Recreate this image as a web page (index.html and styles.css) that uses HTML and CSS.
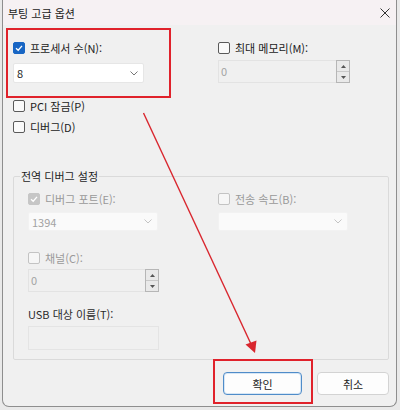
FILE: index.html
```html
<!DOCTYPE html>
<html lang="ko">
<head>
<meta charset="utf-8">
<title>부팅 고급 옵션</title>
<link rel="stylesheet" href="styles.css">
</head>
<body>
<div class="window">
  <div class="titlebar">
    <span class="title">부팅 고급 옵션</span>
    <svg class="close" width="10" height="10" viewBox="0 0 10 10"><path d="M0.5 0.5 L9.5 9.5 M9.5 0.5 L0.5 9.5" stroke="#333" stroke-width="1" fill="none"/></svg>
  </div>
  <div class="content">
    <div class="two-col top">
      <div class="col">
        <div class="check">
          <span class="box checked"><svg width="10" height="10" viewBox="0 0 10 10"><path d="M2 5.2 L4.2 7.2 L8 2.8" stroke="#fff" stroke-width="1.3" fill="none"/></svg></span>
          <span>프로세서 수(N):</span>
        </div>
        <div class="combo">
          <span>8</span>
          <svg class="chev" width="8" height="5" viewBox="0 0 8 5"><path d="M0.5 0.5 L4 4 L7.5 0.5" stroke="#777" stroke-width="1" fill="none"/></svg>
        </div>
      </div>
      <div class="col">
        <div class="check">
          <span class="box"></span>
          <span>최대 메모리(M):</span>
        </div>
        <div class="spin">
          <span class="val">0</span>
          <div class="spin-btns">
            <span class="sb"><svg width="5" height="3" viewBox="0 0 5 3"><path d="M0 3 L2.5 0 L5 3Z" fill="#555"/></svg></span>
            <span class="sb"><svg width="5" height="3" viewBox="0 0 5 3"><path d="M0 0 L2.5 3 L5 0Z" fill="#555"/></svg></span>
          </div>
        </div>
      </div>
    </div>

    <div class="check pci"><span class="box"></span><span>PCI 잠금(P)</span></div>
    <div class="check dbg"><span class="box"></span><span>디버그(D)</span></div>

    <fieldset class="group">
      <legend>전역 디버그 설정</legend>
      <div class="two-col inner">
        <div class="col">
          <div class="check disabled">
            <span class="box checked"><svg width="10" height="10" viewBox="0 0 10 10"><path d="M2 5.2 L4.2 7.2 L8 2.8" stroke="#fff" stroke-width="1.3" fill="none"/></svg></span>
            <span>디버그 포트(E):</span>
          </div>
          <div class="combo dis">
            <span>1394</span>
            <svg class="chev" width="8" height="5" viewBox="0 0 8 5"><path d="M0.5 0.5 L4 4 L7.5 0.5" stroke="#c4c4c4" stroke-width="1" fill="none"/></svg>
          </div>
        </div>
        <div class="col">
          <div class="check disabled">
            <span class="box"></span>
            <span>전송 속도(B):</span>
          </div>
          <div class="combo dis">
            <span></span>
            <svg class="chev" width="8" height="5" viewBox="0 0 8 5"><path d="M0.5 0.5 L4 4 L7.5 0.5" stroke="#c4c4c4" stroke-width="1" fill="none"/></svg>
          </div>
        </div>
      </div>
      <div class="check disabled channel"><span class="box"></span><span>채널(C):</span></div>
      <div class="spin small">
        <span class="val">0</span>
        <div class="spin-btns">
          <span class="sb"><svg width="5" height="3" viewBox="0 0 5 3"><path d="M0 3 L2.5 0 L5 3Z" fill="#555"/></svg></span>
          <span class="sb"><svg width="5" height="3" viewBox="0 0 5 3"><path d="M0 0 L2.5 3 L5 0Z" fill="#555"/></svg></span>
        </div>
      </div>
      <div class="label usb">USB 대상 이름(T):</div>
      <div class="textbox"></div>
    </fieldset>

    <div class="buttons">
      <button class="btn primary">확인</button>
      <button class="btn">취소</button>
    </div>
  </div>
</div>
<div class="highlight hl1"></div>
<div class="highlight hl2"></div>
<svg class="arrow" width="400" height="410" viewBox="0 0 400 410">
  <line x1="143.5" y1="113" x2="250.5" y2="343" stroke="#d9262e" stroke-width="1.4"/>
  <polygon points="255,353 245.5,344.5 256.5,340.5" fill="#d9262e"/>
</svg>
</body>
</html>
```
FILE: styles.css
```css
* { box-sizing: border-box; }
html, body {
  margin: 0;
  padding: 0;
}
body {
  width: 400px;
  height: 410px;
  overflow: hidden;
  position: relative;
  background: #e9e9e9;
  font-family: "Noto Sans CJK KR", "Noto Sans", sans-serif;
  font-size: 11px;
  color: #1b1b1b;
}
.window {
  margin-left: 2px;
  width: 395px;
  height: 407px;
  background: #f0f0f0;
  border: 1px solid #8e8e8e;
  border-top: none;
  border-radius: 0 0 7px 7px;
  display: flex;
  flex-direction: column;
  overflow: hidden;
}
.titlebar {
  height: 25px;
  background: #f6f1f3;
  display: flex;
  align-items: center;
  justify-content: space-between;
  padding: 0 6px 0 5px;
  flex: none;
}
.title {
  font-size: 11px;
  line-height: 16px;
  color: #1a1a1a;
}
.close { display: block; margin-top: 1px; }
.content {
  padding: 15px 7px 0 10px;
  display: flex;
  flex-direction: column;
}
.two-col {
  display: grid;
  grid-template-columns: 205px 131px;
}
.col {
  display: flex;
  flex-direction: column;
}
.check {
  display: flex;
  align-items: center;
  gap: 5px;
  height: 16px;
  line-height: 16px;
  white-space: nowrap;
}
.box {
  width: 12px;
  height: 12px;
  border: 1px solid #5a5a5a;
  border-radius: 2px;
  background: #fafafa;
  display: flex;
  align-items: center;
  justify-content: center;
  flex: none;
}
.box.checked {
  background: #1866c4;
  border-color: #1866c4;
}
.box svg { display: block; }
.check.disabled { color: #999; }
.check.disabled .box {
  border-color: #c3c3c3;
  background: #f6f6f6;
}
.check.disabled .box.checked {
  background: #c6c6c6;
  border-color: #c6c6c6;
}
.combo {
  margin-top: 7px;
  width: 131px;
  height: 20px;
  background: #fff;
  border: 1px solid #e6e6e6;
  border-radius: 2px;
  display: flex;
  align-items: center;
  justify-content: space-between;
  padding: 0 5px 0 3px;
  line-height: 16px;
}
.combo .chev { display: block; }
.combo.dis {
  margin-top: 5px;
  width: 130px;
  height: 19px;
  background: #fafafa;
  border-color: #f2f2f2;
  color: #a3a3a3;
}
.spin {
  margin-top: 4px;
  width: 132px;
  height: 23px;
  border: 1px solid #e3e3e3;
  background: #f0f0f0;
  display: flex;
  align-items: stretch;
  justify-content: space-between;
  color: #a3a3a3;
}
.spin .val {
  padding-left: 2px;
  line-height: 20px;
}
.spin-btns {
  width: 14px;
  display: flex;
  flex-direction: column;
  border: 1px solid #b6b6b6;
  margin: -1px -1px -1px 0;
  background: #e9e9e9;
}
.sb {
  flex: 1;
  display: flex;
  align-items: center;
  justify-content: center;
}
.sb + .sb { border-top: 1px solid #c8c8c8; }
.sb svg { display: block; }
.pci { margin-top: 15px; }
.dbg { margin-top: 5px; }
.group {
  margin: 33px 0 0 0;
  padding: 7px 14px 9px 14px;
  border: 1px solid #dadada;
  border-radius: 2px;
  min-width: 0;
}
.group legend {
  padding: 0 1px;
  margin-left: -8px;
  line-height: 16px;
  color: #1e1e1e;
}
.group .two-col {
  grid-template-columns: 190px 131px;
}
.channel { margin-top: 19px; }
.spin.small {
  margin-top: 3px;
  width: 131px;
}
.label {
  height: 16px;
  line-height: 16px;
  white-space: nowrap;
}
.usb { margin-top: 14px; color: #2a2a2a; }
.textbox {
  margin-top: 4px;
  width: 131px;
  height: 24px;
  border: 1px solid #e4e4e4;
  background: #f0f0f0;
}
.buttons {
  margin-top: 12px;
  display: flex;
  justify-content: flex-end;
  gap: 15px;
}
.btn {
  height: 23px;
  width: 72px;
  background: #fdfdfd;
  border: 1px solid #d3d3d3;
  border-radius: 4px;
  font-family: inherit;
  font-size: 11px;
  color: #1b1b1b;
  padding: 0;
}
.btn.primary {
  width: 79px;
  border: 1px solid #4f8cc9;
  box-shadow: inset 0 0 0 1px #d6e6f5;
}
.highlight {
  position: absolute;
  border: 2px solid #e0222b;
  pointer-events: none;
}
.hl1 { left: 6px; top: 28px; width: 165px; height: 70px; }
.hl2 { left: 213px; top: 359px; width: 100px; height: 45px; }
.arrow {
  position: absolute;
  left: 0;
  top: 0;
  pointer-events: none;
}
```
